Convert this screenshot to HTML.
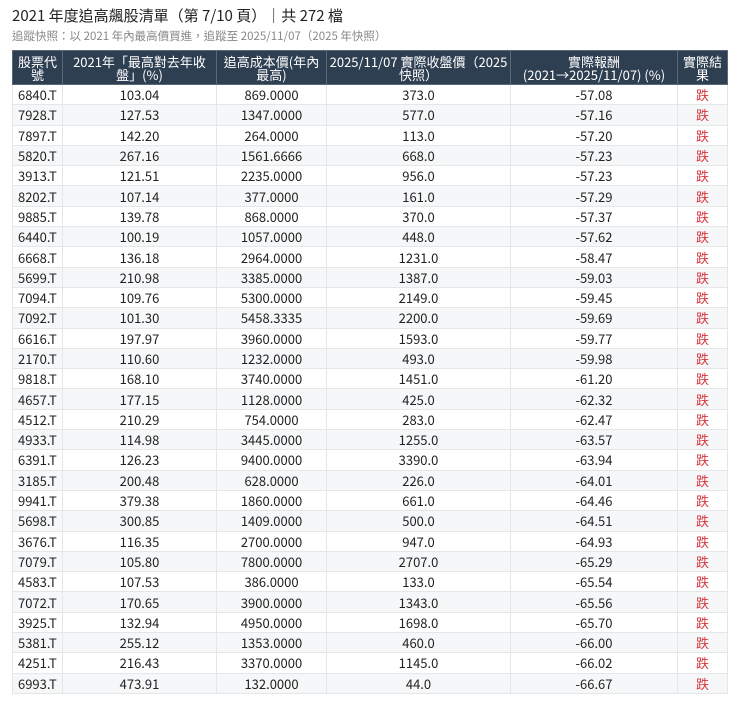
<!DOCTYPE html><html><head><meta charset="utf-8"><style>
body{margin:0;background:#fff;font-family:"Noto Sans CJK TC",sans-serif;color:#222;}
h1{position:absolute;left:12px;top:5px;margin:0;font-size:15px;line-height:22px;font-weight:normal;color:#222;}
.sub{position:absolute;left:12px;top:28px;font-size:11.5px;line-height:16px;color:#888;}
table{position:absolute;left:12px;top:50px;border-collapse:collapse;width:715px;table-layout:fixed;font-size:13px;}
th{background:#2f3f52;color:#fff;font-weight:normal;height:33px;line-height:13px;padding:0 1px;border:1px solid #5a6878;font-size:13px;word-break:break-all;}
td{height:19.3px;padding:0;text-align:center;border:1px solid #e4e6e8;line-height:19px;}
td:first-child{text-align:left;padding-left:5px;}
tr:nth-child(even) td{background:#f6f7f8;}
td.r{color:#d9363e;}
</style></head><body>
<h1>2021 年度追高飆股清單（第 7/10 頁）｜共 272 檔</h1>
<div class="sub">追蹤快照：以 2021 年內最高價買進，追蹤至 2025/11/07（2025 年快照）</div>
<table>
<colgroup><col style="width:50px"><col style="width:154px"><col style="width:110px"><col style="width:184px"><col style="width:167px"><col style="width:50px"></colgroup>
<thead><tr><th>股票代號</th><th>2021年「最高對去年收盤」(%)</th><th>追高成本價(年內最高)</th><th>2025/11/07 實際收盤價（2025快照）</th><th>實際報酬<br>(2021→2025/11/07) (%)</th><th>實際結果</th></tr></thead>
<tbody>
<tr><td>6840.T</td><td>103.04</td><td>869.0000</td><td>373.0</td><td>-57.08</td><td class="r">跌</td></tr>
<tr><td>7928.T</td><td>127.53</td><td>1347.0000</td><td>577.0</td><td>-57.16</td><td class="r">跌</td></tr>
<tr><td>7897.T</td><td>142.20</td><td>264.0000</td><td>113.0</td><td>-57.20</td><td class="r">跌</td></tr>
<tr><td>5820.T</td><td>267.16</td><td>1561.6666</td><td>668.0</td><td>-57.23</td><td class="r">跌</td></tr>
<tr><td>3913.T</td><td>121.51</td><td>2235.0000</td><td>956.0</td><td>-57.23</td><td class="r">跌</td></tr>
<tr><td>8202.T</td><td>107.14</td><td>377.0000</td><td>161.0</td><td>-57.29</td><td class="r">跌</td></tr>
<tr><td>9885.T</td><td>139.78</td><td>868.0000</td><td>370.0</td><td>-57.37</td><td class="r">跌</td></tr>
<tr><td>6440.T</td><td>100.19</td><td>1057.0000</td><td>448.0</td><td>-57.62</td><td class="r">跌</td></tr>
<tr><td>6668.T</td><td>136.18</td><td>2964.0000</td><td>1231.0</td><td>-58.47</td><td class="r">跌</td></tr>
<tr><td>5699.T</td><td>210.98</td><td>3385.0000</td><td>1387.0</td><td>-59.03</td><td class="r">跌</td></tr>
<tr><td>7094.T</td><td>109.76</td><td>5300.0000</td><td>2149.0</td><td>-59.45</td><td class="r">跌</td></tr>
<tr><td>7092.T</td><td>101.30</td><td>5458.3335</td><td>2200.0</td><td>-59.69</td><td class="r">跌</td></tr>
<tr><td>6616.T</td><td>197.97</td><td>3960.0000</td><td>1593.0</td><td>-59.77</td><td class="r">跌</td></tr>
<tr><td>2170.T</td><td>110.60</td><td>1232.0000</td><td>493.0</td><td>-59.98</td><td class="r">跌</td></tr>
<tr><td>9818.T</td><td>168.10</td><td>3740.0000</td><td>1451.0</td><td>-61.20</td><td class="r">跌</td></tr>
<tr><td>4657.T</td><td>177.15</td><td>1128.0000</td><td>425.0</td><td>-62.32</td><td class="r">跌</td></tr>
<tr><td>4512.T</td><td>210.29</td><td>754.0000</td><td>283.0</td><td>-62.47</td><td class="r">跌</td></tr>
<tr><td>4933.T</td><td>114.98</td><td>3445.0000</td><td>1255.0</td><td>-63.57</td><td class="r">跌</td></tr>
<tr><td>6391.T</td><td>126.23</td><td>9400.0000</td><td>3390.0</td><td>-63.94</td><td class="r">跌</td></tr>
<tr><td>3185.T</td><td>200.48</td><td>628.0000</td><td>226.0</td><td>-64.01</td><td class="r">跌</td></tr>
<tr><td>9941.T</td><td>379.38</td><td>1860.0000</td><td>661.0</td><td>-64.46</td><td class="r">跌</td></tr>
<tr><td>5698.T</td><td>300.85</td><td>1409.0000</td><td>500.0</td><td>-64.51</td><td class="r">跌</td></tr>
<tr><td>3676.T</td><td>116.35</td><td>2700.0000</td><td>947.0</td><td>-64.93</td><td class="r">跌</td></tr>
<tr><td>7079.T</td><td>105.80</td><td>7800.0000</td><td>2707.0</td><td>-65.29</td><td class="r">跌</td></tr>
<tr><td>4583.T</td><td>107.53</td><td>386.0000</td><td>133.0</td><td>-65.54</td><td class="r">跌</td></tr>
<tr><td>7072.T</td><td>170.65</td><td>3900.0000</td><td>1343.0</td><td>-65.56</td><td class="r">跌</td></tr>
<tr><td>3925.T</td><td>132.94</td><td>4950.0000</td><td>1698.0</td><td>-65.70</td><td class="r">跌</td></tr>
<tr><td>5381.T</td><td>255.12</td><td>1353.0000</td><td>460.0</td><td>-66.00</td><td class="r">跌</td></tr>
<tr><td>4251.T</td><td>216.43</td><td>3370.0000</td><td>1145.0</td><td>-66.02</td><td class="r">跌</td></tr>
<tr><td>6993.T</td><td>473.91</td><td>132.0000</td><td>44.0</td><td>-66.67</td><td class="r">跌</td></tr>
</tbody></table>
</body></html>
